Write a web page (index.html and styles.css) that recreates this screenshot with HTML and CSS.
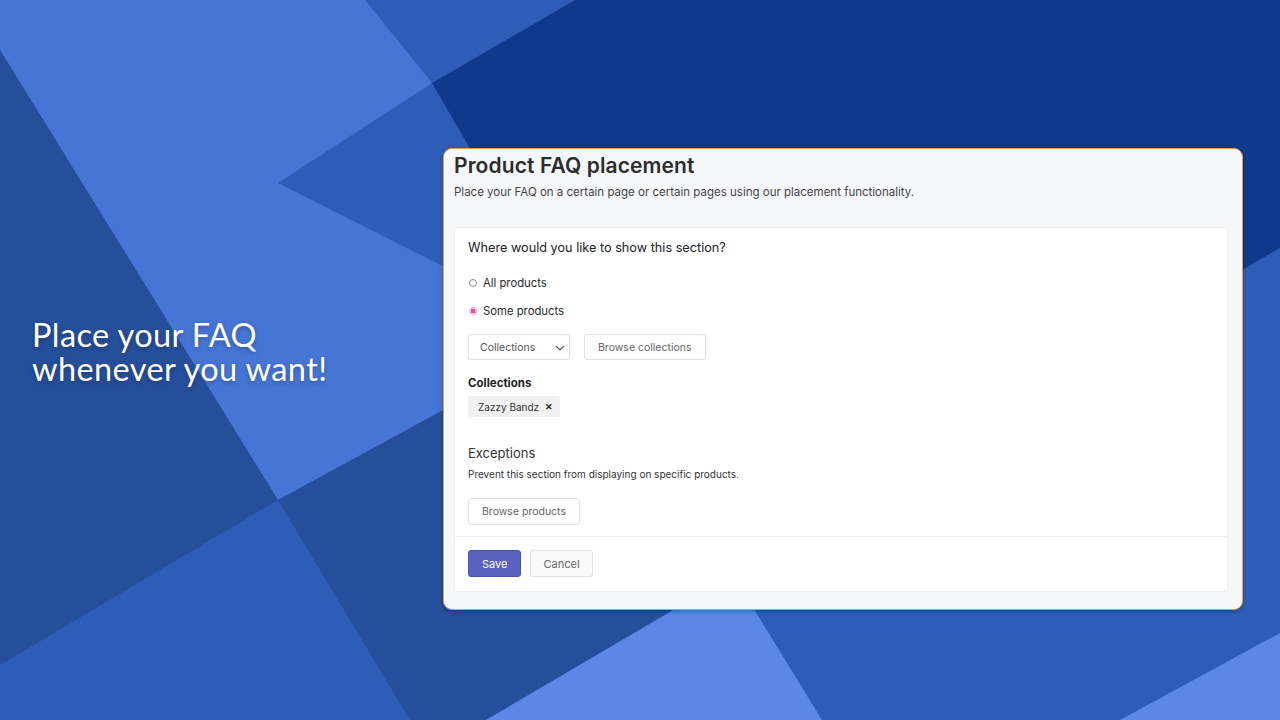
FILE: index.html
```html
<!DOCTYPE html>
<html lang="en">
<head>
<meta charset="utf-8">
<title>Product FAQ placement</title>
<link rel="stylesheet" href="styles.css">
</head>
<body>
<svg class="bg" viewBox="0 0 1280 720" preserveAspectRatio="none" aria-hidden="true">
  <rect width="1280" height="720" fill="#2e5db8"/>
  <polygon fill="#0f398b" points="575,0 1280,0 1280,248 1100,352 500,200 432,83"/>
  <polygon fill="#4675d6" points="0,0 365,0 432,83 278,183 500,295 500,380 278,500 0,50"/>
  <polygon fill="#264f9b" points="0,50 278,500 0,665"/>
  <polygon fill="#264f9b" points="278,500 500,379 733,575 486,720 410,720"/>
  <polygon fill="#5a88e4" points="733,575 486,720 822,720"/>
  <polygon fill="#5a88e4" points="1280,633 1280,720 1120,720"/>
</svg>
<main class="stage">
  <h1 class="hero"><span class="hero-line">Place your FAQ</span><span class="hero-line">whenever you want!</span></h1>
  <section class="card">
    <header class="card-head">
      <h2 class="card-title">Product FAQ placement</h2>
      <p class="card-sub">Place your FAQ on a certain page or certain pages using our placement functionality.</p>
    </header>
    <div class="panel">
      <div class="panel-body">
        <h3 class="q">Where would you like to show this section?</h3>
        <label class="radio"><span class="dot"></span>All products</label>
        <label class="radio"><span class="dot on"></span>Some products</label>
        <div class="row">
          <div class="select">Collections
            <svg class="chev" viewBox="0 0 10 6" width="10" height="6"><path d="M1 1l4 4 4-4" fill="none" stroke="#555" stroke-width="1.1"/></svg>
          </div>
          <button class="btn">Browse collections</button>
        </div>
        <div class="label-bold">Collections</div>
        <div class="tag">Zazzy Bandz <span class="x">✕</span></div>
        <h3 class="sub-h">Exceptions</h3>
        <p class="help">Prevent this section from displaying on specific products.</p>
        <button class="btn btn-lg">Browse products</button>
      </div>
      <div class="panel-foot">
        <button class="btn btn-primary">Save</button>
        <button class="btn btn-cancel">Cancel</button>
      </div>
    </div>
  </section>
</main>
</body>
</html>
```
FILE: styles.css
```css
* { box-sizing: border-box; }
html, body { margin: 0; padding: 0; }
body {
  width: 1280px;
  height: 720px;
  overflow: hidden;
  position: relative;
  font-family: "Inter", "Noto Sans", sans-serif;
  color: #2a2a2a;
}
.bg {
  position: absolute;
  left: 0; top: 0;
  width: 1280px; height: 720px;
  z-index: 0;
}
.stage {
  position: relative;
  z-index: 1;
  display: grid;
  grid-template-columns: 443px 800px;
  align-items: start;
  padding-top: 148px;
}
.hero {
  margin: 170px 0 0 0;
  padding-left: 32px;
  font-family: "Lato", "Open Sans", sans-serif;
  font-weight: 400;
  font-size: 32.5px;
  letter-spacing: 0.4px;
  color: #fff;
  text-shadow: 0 2px 4px rgba(0,0,0,0.25);
}
.hero-line {
  display: block;
  height: 34px;
  line-height: 34px;
}
.card {
  height: 462px;
  background: #f6f7f9;
  border: 1px solid #d9a546;
  border-radius: 9px;
  box-shadow: 0 2px 4px rgba(0,0,0,0.25);
  padding: 3px 14px 0 10px;
}
.card-title {
  margin: 0;
  font-size: 21px;
  font-weight: 600;
  line-height: 28px;
  color: #2d2d2d;
  letter-spacing: 0.1px;
}
.card-sub {
  margin: 4px 0 0 0;
  font-size: 11.5px;
  line-height: 16px;
  color: #454545;
}
.panel {
  margin-top: 27px;
  background: #fff;
  border: 1px solid #eceef1;
  border-radius: 3px;
  height: 365px;
  display: flex;
  flex-direction: column;
}
.panel-body {
  padding: 11px 13px 11px 13px;
  display: flex;
  flex-direction: column;
  align-items: flex-start;
  border-bottom: 1px solid #eceef1;
}
.q {
  margin: 0 0 18px 0;
  font-size: 12.7px;
  font-weight: 400;
  line-height: 18px;
  color: #222;
}
.radio {
  display: flex;
  align-items: center;
  gap: 6px;
  font-size: 11.3px;
  line-height: 16px;
  color: #2a2a2a;
  margin-bottom: 12px;
}
.dot {
  width: 8px; height: 8px;
  border-radius: 50%;
  border: 1px solid #8a8a8a;
  background: #fff;
  margin-left: 1px;
}
.dot.on {
  border-color: #f2a6c8;
  background: radial-gradient(circle, #e2559a 0 2.2px, #fbe3ee 2.6px);
}
.row {
  display: flex;
  gap: 14px;
  margin-top: 3px;
}
.select {
  width: 102px;
  height: 26px;
  border: 1px solid #dfe1e4;
  border-radius: 3px;
  background: #fff;
  display: flex;
  align-items: center;
  justify-content: space-between;
  padding: 0 4px 0 11px;
  font-size: 10.5px;
  color: #555;
}
.chev { margin-top: 1px; }
.btn {
  height: 26px;
  padding: 0 13px;
  border: 1px solid #dfe1e4;
  border-radius: 3px;
  background: #fff;
  font-family: inherit;
  font-size: 10.5px;
  color: #666;
  cursor: pointer;
}
.label-bold {
  margin-top: 16px;
  font-size: 11.5px;
  font-weight: 700;
  line-height: 14px;
  color: #1e1e1e;
}
.tag {
  margin-top: 6px;
  height: 21px;
  display: flex;
  align-items: center;
  gap: 6px;
  padding: 0 7px 0 10px;
  background: #f1f1f2;
  border-radius: 3px;
  font-size: 10px;
  color: #333;
}
.x { font-size: 9px; font-weight: 700; color: #222; }
.sub-h {
  margin: 27px 0 0 0;
  font-size: 13px;
  font-weight: 400;
  line-height: 18px;
  color: #333;
}
.help {
  margin: 5px 0 0 0;
  font-size: 10px;
  line-height: 14px;
  color: #333;
}
.btn-lg { height: 27px; margin-top: 17px; padding: 0 13px; }
.panel-foot {
  padding: 13px 13px;
  display: flex;
  gap: 9px;
}
.btn-primary {
  height: 27px;
  padding: 0 13px;
  background: #5b62bd;
  border-color: #4c53ad;
  color: #fff;
  font-size: 11px;
}
.btn-cancel {
  height: 27px;
  padding: 0 12px;
  background: #fafafa;
  font-size: 11px;
}
```
